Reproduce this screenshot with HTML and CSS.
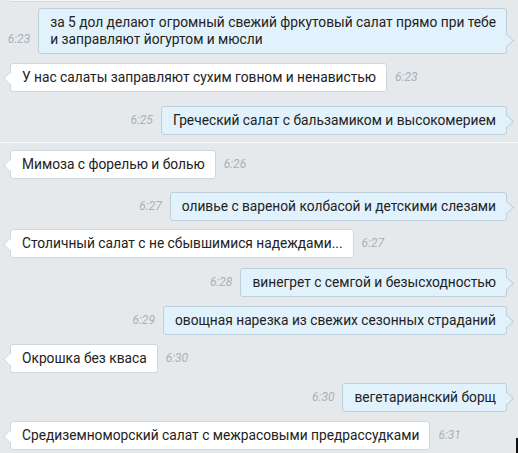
FILE: index.html
```html
<!DOCTYPE html>
<html lang="ru">
<head>
<meta charset="utf-8">
<title>Салаты</title>
<link rel="stylesheet" href="styles.css">
</head>
<body>
<div class="chat">
  <div class="cut-bubble"></div>

  <div class="msg out first">
    <span class="time">6:23</span>
    <div class="bubble">за 5 дол делают огромный свежий фркутовый салат прямо при тебе<br>и заправляют йогуртом и мюсли</div>
  </div>

  <div class="msg in">
    <div class="bubble">У нас салаты заправляют сухим говном и ненавистью</div>
    <span class="time">6:23</span>
  </div>

  <div class="msg out loose">
    <span class="time">6:25</span>
    <div class="bubble">Греческий салат с бальзамиком и высокомерием</div>
  </div>

  <div class="divider"></div>

  <div class="msg in after-divider">
    <div class="bubble">Мимоза с форелью и болью</div>
    <span class="time">6:26</span>
  </div>

  <div class="msg out loose-13">
    <span class="time">6:27</span>
    <div class="bubble">оливье с вареной колбасой и детскими слезами</div>
  </div>

  <div class="msg in tight">
    <div class="bubble">Столичный салат с не сбывшимися надеждами...</div>
    <span class="time">6:27</span>
  </div>

  <div class="msg out wide">
    <span class="time">6:28</span>
    <div class="bubble">винегрет с семгой и безысходностью</div>
  </div>

  <div class="msg out">
    <span class="time">6:29</span>
    <div class="bubble">овощная нарезка из свежих сезонных страданий</div>
  </div>

  <div class="msg in">
    <div class="bubble">Окрошка без кваса</div>
    <span class="time">6:30</span>
  </div>

  <div class="msg out wide">
    <span class="time">6:30</span>
    <div class="bubble">вегетарианский борщ</div>
  </div>

  <div class="msg in">
    <div class="bubble">Средиземноморский салат с межрасовыми предрассудками</div>
    <span class="time">6:31</span>
  </div>

  <div class="cursor"></div>
</div>
</body>
</html>
```

FILE: styles.css
```css
html, body {
  margin: 0;
  padding: 0;
}

body {
  background: #e5e9ec;
  font-family: Roboto, "Noto Sans", "Liberation Sans", sans-serif;
  color: #222;
  width: 518px;
  height: 453px;
  overflow: hidden;
}

.chat {
  position: relative;
  height: 453px;
  display: flex;
  flex-direction: column;
  padding: 0 11px 0 10px;
  box-sizing: border-box;
}

/* bottom edge of an earlier message scrolled out of view */
.cut-bubble {
  width: 110px;
  height: 1px;
  background: #f3f5f7;
  border-bottom: 1px solid #d3d9de;
}

.msg {
  display: flex;
  align-items: flex-end;
  gap: 8px;
  margin-top: 9px;
}

.msg.out { justify-content: flex-end; }
.msg.in { justify-content: flex-start; }

.msg.first { margin-top: 6px; }
.msg.loose { margin-top: 14px; }
.msg.loose-13 { margin-top: 13px; }
.msg.tight { margin-top: 8px; }
.msg.wide { margin-top: 10px; }
.msg.after-divider { margin-top: 7px; }

.bubble {
  position: relative;
  font-size: 13.75px;
  line-height: 17px;
  padding: 5px 10px 5px 11px;
  border-radius: 3px;
  border: 1px solid;
  white-space: nowrap;
}

.msg.out .bubble {
  background: #e2f2fc;
  border-color: #bccfdb;
}

.msg.in .bubble {
  background: #fff;
  border-color: #d0d6dc;
}

/* speech tails */
.bubble::before {
  content: "";
  position: absolute;
  width: 8px;
  height: 8px;
  bottom: 8px;
  transform: rotate(45deg);
  border: 1px solid;
  border-color: inherit;
  background: inherit;
}

.msg.out .bubble::before {
  right: -6px;
  border-left: none;
  border-bottom: none;
}

.msg.in .bubble::before {
  left: -6px;
  border-right: none;
  border-top: none;
}

.time {
  font-size: 12px;
  font-style: italic;
  color: #a9b1b9;
  line-height: 17px;
  padding-bottom: 6px;
}

.divider {
  height: 1px;
  background: #f8f9fa;
  margin: 7px -11px 0 -10px;
}

.cursor {
  position: absolute;
  right: 0;
  bottom: 0;
  width: 2px;
  height: 15px;
  background: #111;
}
```
